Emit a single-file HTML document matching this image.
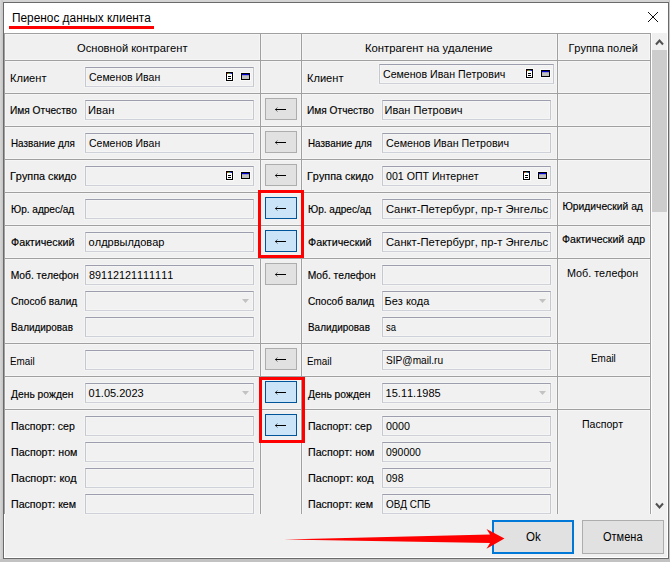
<!DOCTYPE html>
<html lang="ru"><head><meta charset="utf-8"><title>Перенос данных клиента</title>
<style>
html,body{margin:0;padding:0}
body{width:670px;height:562px;overflow:hidden;position:relative;background:#d4d4d4;font-family:"Liberation Sans", sans-serif;color:#000}
body>div,body>span,body>svg{position:absolute;display:block;box-sizing:content-box}
#win{left:3px;top:2px;width:664px;height:555px;border:1px solid #6a6a6a;background:#fff}
#title{left:4px;top:3px;width:664px;height:30px;background:#fff}
#content{left:5px;top:33px;width:662px;height:524px;background:#f0f0f0}
.in{box-shadow:0 0 0 1px #f4f4f4,inset 0 0 0 1px #f5f5f5;border:1px solid #c6c8d0;border-top-color:#9c9eae;border-bottom-color:#cfd1d8;background:#f1f1f1}
.ab{width:30px;height:20px;border:1px solid #adadad;background:#e1e1e1}
.ab.hot{border-color:#005499;background:#cce4f7}
.ab svg{position:absolute;left:9px;top:7px}
.btn{background:#e1e1e1}
.b{-webkit-text-stroke:0.15px #000}
.t{white-space:nowrap;line-height:16px;height:16px;transform-origin:0 0;font-kerning:none}
</style></head>
<body>
<div style="left:1px;top:0px;width:1px;height:562px;background:#cdcdcd"></div>
<div style="left:2px;top:0px;width:1px;height:562px;background:#c9c9c9"></div>
<div style="left:669px;top:0px;width:1px;height:562px;background:#c8c8c8"></div>
<div style="left:0px;top:559px;width:670px;height:3px;background:#c2c2c2"></div>
<div id="win"></div>
<div id="title"></div>
<div id="content"></div>
<div style="left:9px;top:26px;width:145px;height:3px;background:#ff0000"></div>
<svg class="ic" style="left:647px;top:11px" width="12" height="12" viewBox="0 0 12 12"><path d="M1 1L11 11M11 1L1 11" stroke="#000" stroke-width="0.95" fill="none"/></svg>
<div style="left:5px;top:34px;width:646px;height:1px;background:#f6f6f6"></div>
<div style="left:5px;top:59px;width:646px;height:3px;background:#f6f6f6"></div>
<div style="left:5px;top:92px;width:646px;height:3px;background:#f6f6f6"></div>
<div style="left:5px;top:125px;width:646px;height:3px;background:#f6f6f6"></div>
<div style="left:5px;top:158px;width:646px;height:3px;background:#f6f6f6"></div>
<div style="left:5px;top:191px;width:646px;height:3px;background:#f6f6f6"></div>
<div style="left:5px;top:224px;width:646px;height:3px;background:#f6f6f6"></div>
<div style="left:5px;top:257px;width:646px;height:3px;background:#f6f6f6"></div>
<div style="left:5px;top:342px;width:646px;height:3px;background:#f6f6f6"></div>
<div style="left:5px;top:375px;width:646px;height:3px;background:#f6f6f6"></div>
<div style="left:5px;top:408px;width:646px;height:3px;background:#f6f6f6"></div>
<div style="left:259px;top:34px;width:3px;height:480px;background:#f6f6f6"></div>
<div style="left:300px;top:34px;width:3px;height:480px;background:#f6f6f6"></div>
<div style="left:556px;top:34px;width:3px;height:480px;background:#f6f6f6"></div>
<div style="left:5px;top:34px;width:1px;height:480px;background:#f6f6f6"></div>
<div style="left:649px;top:34px;width:1px;height:480px;background:#f6f6f6"></div>
<div style="left:4px;top:33px;width:647px;height:1px;background:#a0a0a0"></div>
<div style="left:4px;top:60px;width:647px;height:1px;background:#a0a0a0"></div>
<div style="left:4px;top:93px;width:647px;height:1px;background:#a0a0a0"></div>
<div style="left:4px;top:126px;width:647px;height:1px;background:#a0a0a0"></div>
<div style="left:4px;top:159px;width:647px;height:1px;background:#a0a0a0"></div>
<div style="left:4px;top:192px;width:647px;height:1px;background:#a0a0a0"></div>
<div style="left:4px;top:225px;width:647px;height:1px;background:#a0a0a0"></div>
<div style="left:4px;top:258px;width:647px;height:1px;background:#a0a0a0"></div>
<div style="left:4px;top:343px;width:647px;height:1px;background:#a0a0a0"></div>
<div style="left:4px;top:376px;width:647px;height:1px;background:#a0a0a0"></div>
<div style="left:4px;top:409px;width:647px;height:1px;background:#a0a0a0"></div>
<div style="left:4px;top:33px;width:1px;height:481px;background:#a0a0a0"></div>
<div style="left:260px;top:33px;width:1px;height:481px;background:#a0a0a0"></div>
<div style="left:301px;top:33px;width:1px;height:481px;background:#a0a0a0"></div>
<div style="left:557px;top:33px;width:1px;height:481px;background:#a0a0a0"></div>
<div style="left:650px;top:33px;width:1px;height:481px;background:#a0a0a0"></div>
<div style="left:651px;top:33px;width:1px;height:481px;background:#fff"></div>
<div style="left:652px;top:33px;width:15px;height:481px;background:#f0f0f0"></div>
<div style="left:652px;top:50px;width:15px;height:162px;background:#cdcdcd"></div>
<svg class="ic" style="left:655px;top:38px" width="9" height="8" viewBox="0 0 9 8"><path d="M1 6.5L4.5 2.5L8 6.5" stroke="#505050" stroke-width="2" fill="none"/></svg>
<svg class="ic" style="left:655px;top:502px" width="9" height="8" viewBox="0 0 9 8"><path d="M1 1.5L4.5 5.5L8 1.5" stroke="#505050" stroke-width="2" fill="none"/></svg>
<div class="in" style="left:85px;top:67px;width:167px;height:18px"></div>
<div class="in" style="left:379px;top:64px;width:173px;height:18px"></div>
<div class="in" style="left:85px;top:100px;width:167px;height:18px"></div>
<div class="in" style="left:382px;top:100px;width:167px;height:18px"></div>
<div class="in" style="left:85px;top:133px;width:167px;height:18px"></div>
<div class="in" style="left:382px;top:133px;width:167px;height:18px"></div>
<div class="in" style="left:85px;top:166px;width:167px;height:18px"></div>
<div class="in" style="left:382px;top:166px;width:167px;height:18px"></div>
<div class="in" style="left:85px;top:199px;width:167px;height:18px"></div>
<div class="in" style="left:382px;top:199px;width:167px;height:18px"></div>
<div class="in" style="left:85px;top:232px;width:167px;height:18px"></div>
<div class="in" style="left:382px;top:232px;width:167px;height:18px"></div>
<div class="in" style="left:85px;top:265px;width:167px;height:18px"></div>
<div class="in" style="left:382px;top:265px;width:167px;height:18px"></div>
<div class="in" style="left:85px;top:291px;width:167px;height:18px"></div>
<div class="in" style="left:382px;top:291px;width:167px;height:18px"></div>
<div class="in" style="left:85px;top:317px;width:167px;height:18px"></div>
<div class="in" style="left:382px;top:317px;width:167px;height:18px"></div>
<div class="in" style="left:85px;top:350px;width:167px;height:18px"></div>
<div class="in" style="left:382px;top:350px;width:167px;height:18px"></div>
<div class="in" style="left:85px;top:383px;width:167px;height:18px"></div>
<div class="in" style="left:382px;top:383px;width:167px;height:18px"></div>
<div class="in" style="left:85px;top:416px;width:167px;height:18px"></div>
<div class="in" style="left:382px;top:416px;width:167px;height:18px"></div>
<div class="in" style="left:85px;top:442px;width:167px;height:18px"></div>
<div class="in" style="left:382px;top:442px;width:167px;height:18px"></div>
<div class="in" style="left:85px;top:468px;width:167px;height:18px"></div>
<div class="in" style="left:382px;top:468px;width:167px;height:18px"></div>
<div class="in" style="left:85px;top:494px;width:167px;height:18px"></div>
<div class="in" style="left:382px;top:494px;width:167px;height:18px"></div>
<svg class="ic" style="left:225px;top:71px" width="9" height="11" viewBox="0 0 9 11"><rect x="0" y="0" width="9" height="11" fill="#fafafa"/><rect x="1.5" y="1.5" width="6" height="8" fill="#fff" stroke="#000" stroke-width="1"/><rect x="2" y="2" width="1.7" height="1" fill="#e02020"/><rect x="3.7" y="2" width="1.6" height="1" fill="#20c020"/><rect x="5.3" y="2" width="1.7" height="1" fill="#2020e0"/><rect x="3" y="5" width="3" height="1" fill="#000"/><rect x="3" y="7" width="3" height="1" fill="#000"/></svg>
<svg class="ic" style="left:240px;top:72px" width="11" height="9" viewBox="0 0 11 9"><rect x="0" y="0" width="11" height="9" fill="#fafafa"/><rect x="1.5" y="1.5" width="8" height="6" fill="#c0c0c0" stroke="#000" stroke-width="1"/><rect x="2" y="2" width="7" height="1.2" fill="#0000d0"/></svg>
<svg class="ic" style="left:225px;top:170px" width="9" height="11" viewBox="0 0 9 11"><rect x="0" y="0" width="9" height="11" fill="#fafafa"/><rect x="1.5" y="1.5" width="6" height="8" fill="#fff" stroke="#000" stroke-width="1"/><rect x="2" y="2" width="1.7" height="1" fill="#e02020"/><rect x="3.7" y="2" width="1.6" height="1" fill="#20c020"/><rect x="5.3" y="2" width="1.7" height="1" fill="#2020e0"/><rect x="3" y="5" width="3" height="1" fill="#000"/><rect x="3" y="7" width="3" height="1" fill="#000"/></svg>
<svg class="ic" style="left:240px;top:171px" width="11" height="9" viewBox="0 0 11 9"><rect x="0" y="0" width="11" height="9" fill="#fafafa"/><rect x="1.5" y="1.5" width="8" height="6" fill="#c0c0c0" stroke="#000" stroke-width="1"/><rect x="2" y="2" width="7" height="1.2" fill="#0000d0"/></svg>
<svg class="ic" style="left:525px;top:68px" width="9" height="11" viewBox="0 0 9 11"><rect x="0" y="0" width="9" height="11" fill="#fafafa"/><rect x="1.5" y="1.5" width="6" height="8" fill="#fff" stroke="#000" stroke-width="1"/><rect x="2" y="2" width="1.7" height="1" fill="#e02020"/><rect x="3.7" y="2" width="1.6" height="1" fill="#20c020"/><rect x="5.3" y="2" width="1.7" height="1" fill="#2020e0"/><rect x="3" y="5" width="3" height="1" fill="#000"/><rect x="3" y="7" width="3" height="1" fill="#000"/></svg>
<svg class="ic" style="left:540px;top:69px" width="11" height="9" viewBox="0 0 11 9"><rect x="0" y="0" width="11" height="9" fill="#fafafa"/><rect x="1.5" y="1.5" width="8" height="6" fill="#c0c0c0" stroke="#000" stroke-width="1"/><rect x="2" y="2" width="7" height="1.2" fill="#0000d0"/></svg>
<svg class="ic" style="left:522px;top:170px" width="9" height="11" viewBox="0 0 9 11"><rect x="0" y="0" width="9" height="11" fill="#fafafa"/><rect x="1.5" y="1.5" width="6" height="8" fill="#fff" stroke="#000" stroke-width="1"/><rect x="2" y="2" width="1.7" height="1" fill="#e02020"/><rect x="3.7" y="2" width="1.6" height="1" fill="#20c020"/><rect x="5.3" y="2" width="1.7" height="1" fill="#2020e0"/><rect x="3" y="5" width="3" height="1" fill="#000"/><rect x="3" y="7" width="3" height="1" fill="#000"/></svg>
<svg class="ic" style="left:537px;top:171px" width="11" height="9" viewBox="0 0 11 9"><rect x="0" y="0" width="11" height="9" fill="#fafafa"/><rect x="1.5" y="1.5" width="8" height="6" fill="#c0c0c0" stroke="#000" stroke-width="1"/><rect x="2" y="2" width="7" height="1.2" fill="#0000d0"/></svg>
<svg class="ic" style="left:242px;top:299px" width="7" height="4" viewBox="0 0 7 4"><path d="M0 0H7L3.5 4Z" fill="#c2c2c2"/></svg>
<svg class="ic" style="left:242px;top:391px" width="7" height="4" viewBox="0 0 7 4"><path d="M0 0H7L3.5 4Z" fill="#c2c2c2"/></svg>
<svg class="ic" style="left:539px;top:299px" width="7" height="4" viewBox="0 0 7 4"><path d="M0 0H7L3.5 4Z" fill="#c2c2c2"/></svg>
<svg class="ic" style="left:539px;top:391px" width="7" height="4" viewBox="0 0 7 4"><path d="M0 0H7L3.5 4Z" fill="#c2c2c2"/></svg>
<div class="ab" style="left:265px;top:98px"><svg width="11" height="7" viewBox="0 0 11 7"><path d="M0.3 3H11V4H0.3Z" fill="#000"/><path d="M0.4 3.5L2.4 1.5M0.4 3.5L2.4 5.5" stroke="#000" stroke-width="0.9" stroke-opacity="0.7" fill="none"/></svg></div>
<div class="ab" style="left:265px;top:131px"><svg width="11" height="7" viewBox="0 0 11 7"><path d="M0.3 3H11V4H0.3Z" fill="#000"/><path d="M0.4 3.5L2.4 1.5M0.4 3.5L2.4 5.5" stroke="#000" stroke-width="0.9" stroke-opacity="0.7" fill="none"/></svg></div>
<div class="ab" style="left:265px;top:164px"><svg width="11" height="7" viewBox="0 0 11 7"><path d="M0.3 3H11V4H0.3Z" fill="#000"/><path d="M0.4 3.5L2.4 1.5M0.4 3.5L2.4 5.5" stroke="#000" stroke-width="0.9" stroke-opacity="0.7" fill="none"/></svg></div>
<div class="ab hot" style="left:265px;top:197px"><svg width="11" height="7" viewBox="0 0 11 7"><path d="M0.3 3H11V4H0.3Z" fill="#000"/><path d="M0.4 3.5L2.4 1.5M0.4 3.5L2.4 5.5" stroke="#000" stroke-width="0.9" stroke-opacity="0.7" fill="none"/></svg></div>
<div class="ab hot" style="left:265px;top:230px"><svg width="11" height="7" viewBox="0 0 11 7"><path d="M0.3 3H11V4H0.3Z" fill="#000"/><path d="M0.4 3.5L2.4 1.5M0.4 3.5L2.4 5.5" stroke="#000" stroke-width="0.9" stroke-opacity="0.7" fill="none"/></svg></div>
<div class="ab" style="left:265px;top:263px"><svg width="11" height="7" viewBox="0 0 11 7"><path d="M0.3 3H11V4H0.3Z" fill="#000"/><path d="M0.4 3.5L2.4 1.5M0.4 3.5L2.4 5.5" stroke="#000" stroke-width="0.9" stroke-opacity="0.7" fill="none"/></svg></div>
<div class="ab" style="left:265px;top:348px"><svg width="11" height="7" viewBox="0 0 11 7"><path d="M0.3 3H11V4H0.3Z" fill="#000"/><path d="M0.4 3.5L2.4 1.5M0.4 3.5L2.4 5.5" stroke="#000" stroke-width="0.9" stroke-opacity="0.7" fill="none"/></svg></div>
<div class="ab hot" style="left:265px;top:381px"><svg width="11" height="7" viewBox="0 0 11 7"><path d="M0.3 3H11V4H0.3Z" fill="#000"/><path d="M0.4 3.5L2.4 1.5M0.4 3.5L2.4 5.5" stroke="#000" stroke-width="0.9" stroke-opacity="0.7" fill="none"/></svg></div>
<div class="ab hot" style="left:265px;top:414px"><svg width="11" height="7" viewBox="0 0 11 7"><path d="M0.3 3H11V4H0.3Z" fill="#000"/><path d="M0.4 3.5L2.4 1.5M0.4 3.5L2.4 5.5" stroke="#000" stroke-width="0.9" stroke-opacity="0.7" fill="none"/></svg></div>
<div style="left:258px;top:190px;width:40px;height:62px;border:3px solid #ff0000"></div>
<div style="left:259px;top:377px;width:40px;height:60px;border:3px solid #ff0000"></div>
<div class="btn" style="left:492px;top:520px;width:78px;height:30px;border:2px solid #0078d7"></div>
<div class="btn" style="left:582px;top:520px;width:80px;height:32px;border:1px solid #adadad"></div>
<svg class="ic" style="left:280px;top:525px" width="230" height="28" viewBox="280 525 230 28"><path d="M284 539.5L490 534.5L486.5 529L504.5 538.5L486.5 548.7L490 543Z" fill="#ff0000"/></svg>
<span id="h1" class="t" style="left:76.7px;top:40px;font-size:11px;transform:scaleX(1.0137)">Основной контрагент</span>
<span id="h3" class="t" style="left:365.07px;top:40px;font-size:11px;transform:scaleX(1.0267)">Контрагент на удаление</span>
<span id="h4" class="t" style="left:568.4px;top:40px;font-size:11px;">Группа полей</span>
<span id="ttl" class="t" style="left:12.21px;top:10px;font-size:12px;transform:scaleX(0.9872)">Перенос данных клиента</span>
<span id="a0" class="t" style="left:9.72px;top:70px;font-size:11.3px;transform:scaleX(0.9809)">Клиент</span>
<span id="c0" class="t" style="left:306.72px;top:70px;font-size:11.3px;transform:scaleX(0.9809)">Клиент</span>
<span id="a1" class="t b" style="left:10.31px;top:103px;font-size:10.3px;transform:scaleX(0.9867)">Имя Отчество</span>
<span id="c1" class="t b" style="left:307.31px;top:103px;font-size:10.3px;transform:scaleX(0.9867)">Имя Отчество</span>
<span id="a2" class="t b" style="left:10.74px;top:136px;font-size:10.3px;transform:scaleX(0.9558)">Название для</span>
<span id="c2" class="t b" style="left:307.74px;top:136px;font-size:10.3px;transform:scaleX(0.9558)">Название для</span>
<span id="a3" class="t b" style="left:10.15px;top:169px;font-size:10.3px;transform:scaleX(1.0511)">Группа скидо</span>
<span id="c3" class="t b" style="left:307.15px;top:169px;font-size:10.3px;transform:scaleX(1.0511)">Группа скидо</span>
<span id="a4" class="t b" style="left:10.72px;top:202px;font-size:10.3px;transform:scaleX(0.9752)">Юр. адрес/ад</span>
<span id="c4" class="t b" style="left:307.72px;top:202px;font-size:10.3px;transform:scaleX(0.9752)">Юр. адрес/ад</span>
<span id="a5" class="t b" style="left:11.2px;top:235px;font-size:10.3px;transform:scaleX(1.0429)">Фактический</span>
<span id="c5" class="t b" style="left:308.2px;top:235px;font-size:10.3px;transform:scaleX(1.0429)">Фактический</span>
<span id="a6" class="t b" style="left:10.7px;top:268px;font-size:10.3px;">Моб. телефон</span>
<span id="c6" class="t b" style="left:307.7px;top:268px;font-size:10.3px;">Моб. телефон</span>
<span id="a7" class="t b" style="left:11.2px;top:294px;font-size:10.3px;transform:scaleX(0.9837)">Способ валид</span>
<span id="c7" class="t b" style="left:308.2px;top:294px;font-size:10.3px;transform:scaleX(0.9837)">Способ валид</span>
<span id="a8" class="t b" style="left:10.74px;top:320px;font-size:10.3px;transform:scaleX(0.9638)">Валидировав</span>
<span id="c8" class="t b" style="left:307.74px;top:320px;font-size:10.3px;transform:scaleX(0.9638)">Валидировав</span>
<span id="a9" class="t" style="left:9.7px;top:353px;font-size:11px;transform:scaleX(0.8985)">Email</span>
<span id="c9" class="t" style="left:306.7px;top:353px;font-size:11px;transform:scaleX(0.8985)">Email</span>
<span id="a10" class="t b" style="left:11.0px;top:387px;font-size:10.3px;">День рожден</span>
<span id="c10" class="t b" style="left:308.0px;top:387px;font-size:10.3px;">День рожден</span>
<span id="a11" class="t b" style="left:10.58px;top:419px;font-size:10.3px;transform:scaleX(1.0227)">Паспорт: сер</span>
<span id="c11" class="t b" style="left:307.58px;top:419px;font-size:10.3px;transform:scaleX(1.0227)">Паспорт: сер</span>
<span id="a12" class="t b" style="left:10.57px;top:445px;font-size:10.3px;transform:scaleX(1.033)">Паспорт: ном</span>
<span id="c12" class="t b" style="left:307.57px;top:445px;font-size:10.3px;transform:scaleX(1.033)">Паспорт: ном</span>
<span id="a13" class="t b" style="left:10.54px;top:471px;font-size:10.3px;transform:scaleX(1.0584)">Паспорт: код</span>
<span id="c13" class="t b" style="left:307.54px;top:471px;font-size:10.3px;transform:scaleX(1.0584)">Паспорт: код</span>
<span id="a14" class="t b" style="left:10.57px;top:497px;font-size:10.3px;transform:scaleX(1.0319)">Паспорт: кем</span>
<span id="c14" class="t b" style="left:307.57px;top:497px;font-size:10.3px;transform:scaleX(1.0319)">Паспорт: кем</span>
<span id="v0" class="t" style="left:88.6px;top:69px;font-size:11px;transform:scaleX(0.9517)">Семенов Иван</span>
<span id="v1" class="t" style="left:87.58px;top:102px;font-size:11px;transform:scaleX(1.0163)">Иван</span>
<span id="v2" class="t" style="left:88.6px;top:135px;font-size:11px;transform:scaleX(0.9517)">Семенов Иван</span>
<span id="v5" class="t" style="left:88.6px;top:234px;font-size:11px;">олдрвылдовар</span>
<span id="v6" class="t" style="left:88.6px;top:267px;font-size:11px;transform:scaleX(0.9825)">89112121111111</span>
<span id="v10" class="t" style="left:88.6px;top:385px;font-size:11px;">01.05.2023</span>
<span id="w0" class="t" style="left:382.7px;top:66px;font-size:11px;transform:scaleX(0.9645)">Семенов Иван Петрович</span>
<span id="w1" class="t" style="left:384.5px;top:102px;font-size:11px;">Иван Петрович</span>
<span id="w2" class="t" style="left:385.5px;top:135px;font-size:11px;transform:scaleX(0.9708)">Семенов Иван Петрович</span>
<span id="w3" class="t" style="left:385.5px;top:168px;font-size:11px;transform:scaleX(0.9638)">001 ОПТ Интернет</span>
<span id="w4" class="t" style="left:385.5px;top:201px;font-size:11px;transform:scaleX(1.0227)">Санкт-Петербург, пр-т Энгельс</span>
<span id="w5" class="t" style="left:385.5px;top:234px;font-size:11px;transform:scaleX(1.0227)">Санкт-Петербург, пр-т Энгельс</span>
<span id="w7" class="t" style="left:384.5px;top:293px;font-size:11px;">Без кода</span>
<span id="w8" class="t" style="left:385.5px;top:319px;font-size:11px;transform:scaleX(0.8571)">sa</span>
<span id="w9" class="t" style="left:385.5px;top:352px;font-size:11px;transform:scaleX(0.9217)">SIP@mail.ru</span>
<span id="w10" class="t" style="left:385.6px;top:385px;font-size:11px;">15.11.1985</span>
<span id="w11" class="t" style="left:385.5px;top:418px;font-size:11px;transform:scaleX(0.9756)">0000</span>
<span id="w12" class="t" style="left:385.5px;top:444px;font-size:11px;transform:scaleX(0.9468)">090000</span>
<span id="w13" class="t" style="left:385.5px;top:470px;font-size:11px;transform:scaleX(0.9516)">098</span>
<span id="w14" class="t" style="left:385.5px;top:496px;font-size:11px;transform:scaleX(0.9012)">ОВД СПБ</span>
<span id="g0" class="t b" style="left:562.4px;top:199px;font-size:10.3px;">Юридический ад</span>
<span id="g1" class="t b" style="left:562.1px;top:232px;font-size:10.3px;transform:scaleX(1.0245)">Фактический адр</span>
<span id="g2" class="t" style="left:566.82px;top:265px;font-size:11px;transform:scaleX(0.9804)">Моб. телефон</span>
<span id="g3" class="t" style="left:590.6px;top:350px;font-size:11px;transform:scaleX(0.9023)">Email</span>
<span id="g4" class="t" style="left:581.64px;top:416px;font-size:11px;transform:scaleX(0.9601)">Паспорт</span>
<span id="ok" class="t" style="left:526.0px;top:529px;font-size:12px;transform:scaleX(0.9615)">Ok</span>
<span id="cancel" class="t" style="left:603.0px;top:529px;font-size:12px;transform:scaleX(0.9174)">Отмена</span>
</body></html>
